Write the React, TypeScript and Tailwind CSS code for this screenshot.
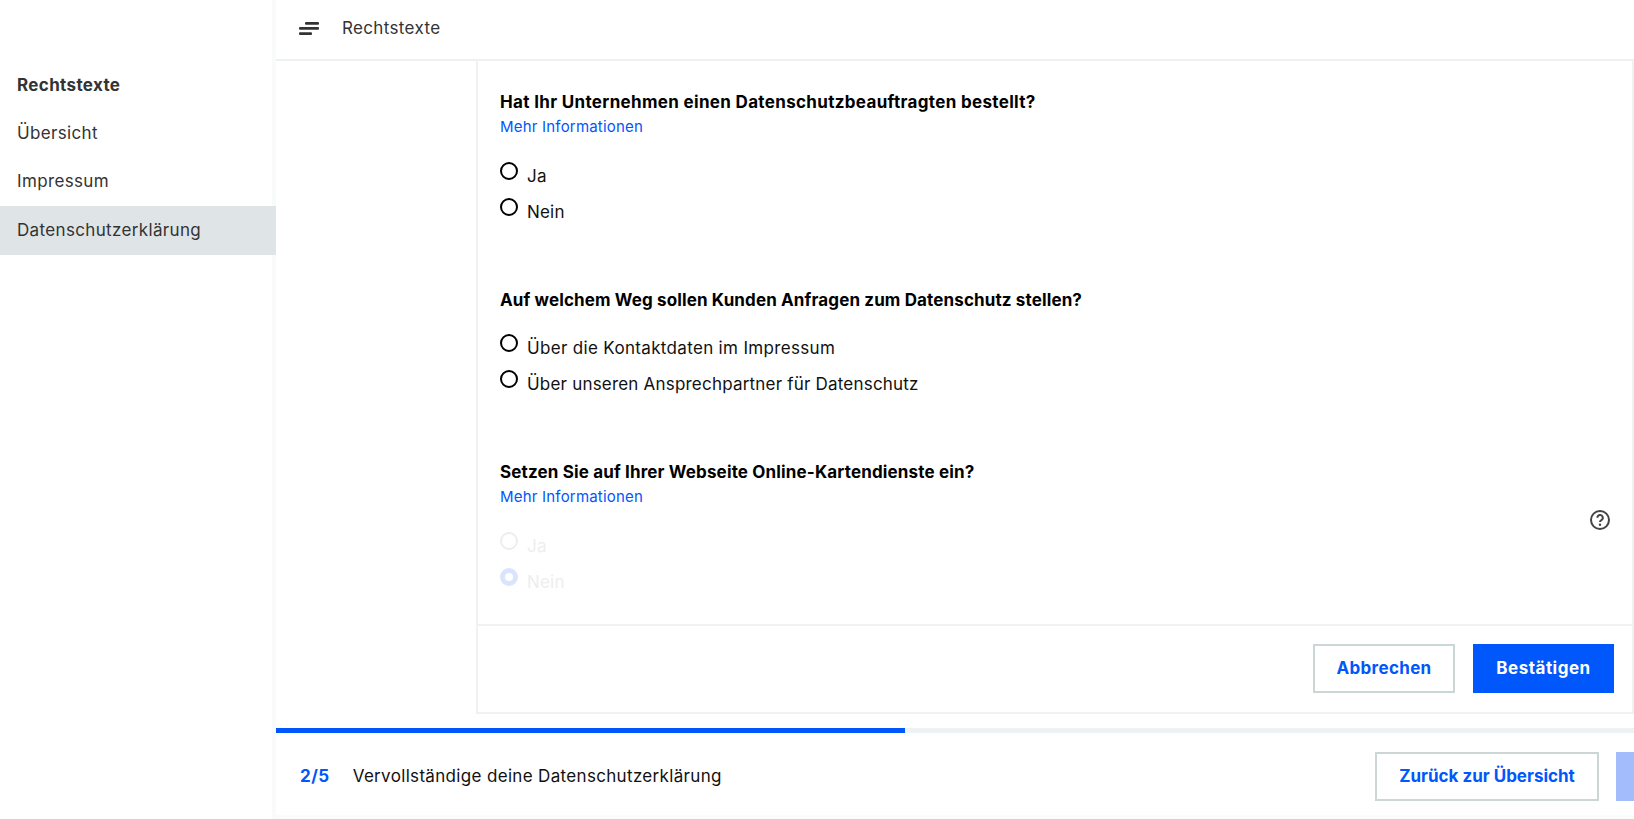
const FONT = "font-['Inter','Liberation_Sans',sans-serif]";

function Radio({ label, checked, faded, className = 'tracking-[0.2px]' }: {
  label: string;
  checked?: boolean;
  faded?: boolean;
  className?: string;
}) {
  let ring = 'border-2 border-black';
  if (faded) ring = checked ? 'border-[5px] border-[#d9e4fd]' : 'border-2 border-[#ededed]';
  return (
    <div className="flex h-[36px] items-start">
      <span className={`mt-[4px] h-[18px] w-[18px] rounded-full bg-white ${ring}`} />
      <span className={`ml-[9px] mt-[6px] text-[17px] leading-[24px] ${className} ${faded ? 'text-[#eeeeee]' : 'text-[#111111]'}`}>{label}</span>
    </div>
  );
}

function Question({ title, more, options, className }: {
  title: string;
  more?: boolean;
  options: React.ReactNode;
  className: string;
}) {
  return (
    <section className={className}>
      <h2 className="text-[17px] font-bold leading-[24px] text-black">{title}</h2>
      {more && <a className="block h-[26px] text-[15px] leading-[26px] tracking-[0.2px] text-[#0057fb]">Mehr Informationen</a>}
      <div className="mt-[18px] tracking-normal">{options}</div>
    </section>
  );
}

function SideItem({ label, className, active }: { label: string; className: string; active?: boolean }) {
  return (
    <div className={`flex items-center pl-[17px] text-[17px] tracking-[0.35px] text-[#333333] ${className} ${active ? '-mr-[4px] bg-[#dfe4e6]' : ''}`}>
      {label}
    </div>
  );
}

function OutlineButton({ label, className }: { label: string; className: string }) {
  return (
    <button className={`h-[49px] border-2 border-[#cbd6d6] bg-white text-[17px] font-bold text-[#0057fb] ${className}`}>
      {label}
    </button>
  );
}

export default function App() {
  return (
    <div className={`flex h-[819px] w-[1634px] overflow-hidden bg-white ${FONT}`}>
      {/* Sidebar */}
      <aside className="w-[276px] shrink-0 border-r-4 border-[#f9fafa] pt-[60px]">
        <div className="flex h-[50px] items-center pl-[17px] pt-[2px] text-[17px] font-bold tracking-[0.35px] text-[#333333]">Rechtstexte</div>
        <SideItem label="Übersicht" className="h-[47px]" />
        <SideItem label="Impressum" className="h-[49px]" />
        <SideItem label="Datenschutzerklärung" className="h-[49px]" active />
      </aside>

      <main className="flex min-w-0 flex-1 flex-col">
        {/* Header */}
        <header className="flex h-[61px] shrink-0 items-center border-b-2 border-[#eef1f1] pb-[2px] pl-[23px]">
          <svg width="20" height="13" viewBox="0 0 20 13" className="text-[#333333]">
            <g fill="currentColor">
              <rect x="6" y="0" width="14" height="2.7" rx="1" />
              <rect x="0" y="5" width="20" height="2.7" rx="1" />
              <rect x="0" y="10.2" width="13" height="2.7" rx="1" />
            </g>
          </svg>
          <span className="ml-[23px] text-[17px] tracking-[0.35px] text-[#333333]">Rechtstexte</span>
        </header>

        {/* Content */}
        <div className="relative shrink-0 pb-[14px] pl-[200px]">
          <div className="flex h-[653px] flex-col border-2 border-t-0 border-[#f0f2f2]">
            <div className="flex-1 pl-[22px] pt-[29px]">
              <Question
                className="tracking-[0.33px]"
                title="Hat Ihr Unternehmen einen Datenschutzbeauftragten bestellt?"
                more
                options={<><Radio label="Ja" /><Radio label="Nein" /></>}
              />
              <Question
                className="mt-[58px] tracking-[0.13px]"
                title="Auf welchem Weg sollen Kunden Anfragen zum Datenschutz stellen?"
                options={<><Radio label="Über die Kontaktdaten im Impressum" className="tracking-[0.33px]" /><Radio label="Über unseren Ansprechpartner für Datenschutz" /></>}
              />
              <Question
                className="mt-[58px] tracking-[0.15px]"
                title="Setzen Sie auf Ihrer Webseite Online-Kartendienste ein?"
                more
                options={<><Radio label="Ja" faded /><Radio label="Nein" checked faded /></>}
              />
            </div>
            <div className="flex h-[88px] shrink-0 items-start justify-end gap-[18px] border-t-2 border-[#f0f2f2] pr-[18px] pt-[18px]">
              <OutlineButton label="Abbrechen" className="w-[142px] tracking-[0.33px]" />
              <button className="h-[49px] w-[141px] bg-[#0057fb] text-[17px] font-bold tracking-[0.5px] text-white">Bestätigen</button>
            </div>
          </div>

          {/* Help button floats over the page */}
          <svg width="22" height="22" viewBox="0 0 22 22" className="absolute right-[23px] top-[448px] text-[#444444]">
            <circle cx="11" cy="11" r="9" fill="none" stroke="currentColor" strokeWidth="2" />
            <path d="M8.4 8.7a2.7 2.7 0 1 1 4 2.4c-.9.5-1.4 1-1.4 1.9" fill="none" stroke="currentColor" strokeWidth="2" />
            <circle cx="11" cy="15.8" r="1.2" fill="currentColor" />
          </svg>
        </div>

        {/* Progress footer */}
        <div className="h-[5px] shrink-0 bg-[#edf2f4]">
          <div className="h-full w-[629px] bg-[#0057fb]" />
        </div>
        <div className="flex h-[86px] shrink-0 items-start border-b-4 border-[#fbfbfb] pl-[24px] pt-[19px]">
          <span className="mt-[12px] text-[17px] font-bold leading-[24px] tracking-[0.5px] text-[#0057fb]">2/5</span>
          <span className="ml-[23px] mt-[12px] text-[17px] leading-[24px] tracking-[0.33px] text-[#111111]">Vervollständige deine Datenschutzerklärung</span>
          <OutlineButton label="Zurück zur Übersicht" className="ml-auto w-[224px]" />
          <div className="ml-[17px] h-[49px] w-[18px] bg-[#a3bcfb]" />
        </div>
      </main>
    </div>
  );
}
